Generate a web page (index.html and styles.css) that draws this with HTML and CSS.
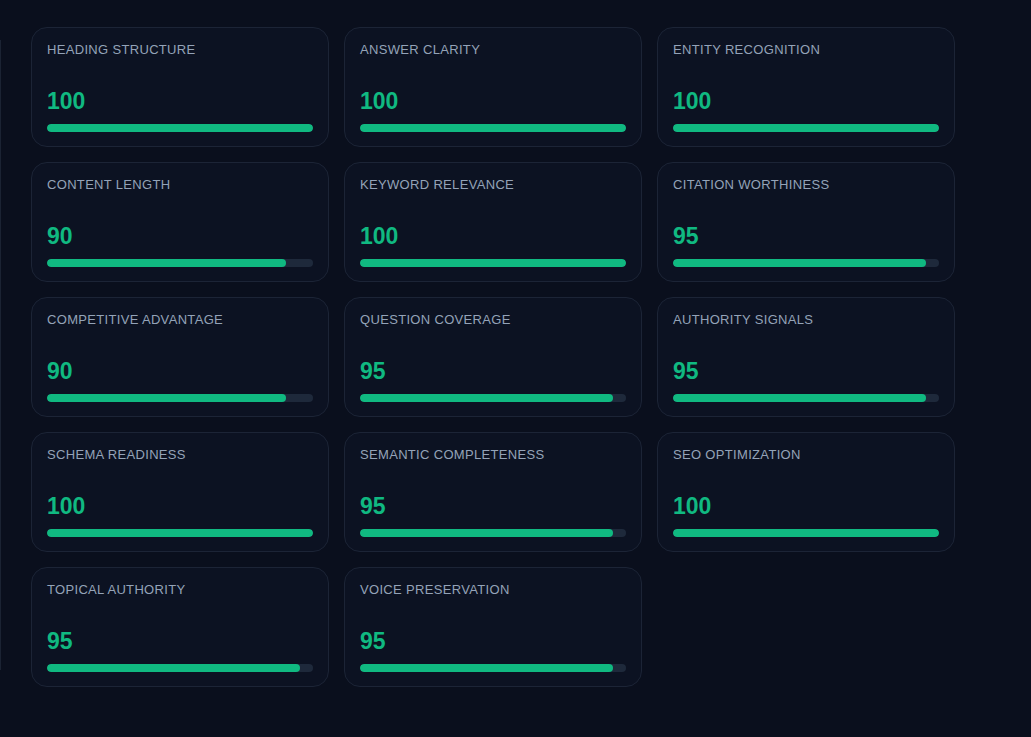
FILE: index.html
```html
<!DOCTYPE html>
<html lang="en">
<head>
    <meta charset="UTF-8">
    <meta name="viewport" content="width=device-width, initial-scale=1.0">
    <title>Content Score Breakdown</title>
    <link rel="stylesheet" href="styles.css">
</head>
<body>
    <div class="page">
        <!-- borda do painel anterior -->
        <div class="rail"></div>

        <div class="scores">
            <div class="score-card">
                <div class="score-label">Heading Structure</div>
                <div class="score-value">100</div>
                <div class="score-track"><div class="score-fill" style="width: 100%"></div></div>
            </div>
            <div class="score-card">
                <div class="score-label">Answer Clarity</div>
                <div class="score-value">100</div>
                <div class="score-track"><div class="score-fill" style="width: 100%"></div></div>
            </div>
            <div class="score-card">
                <div class="score-label">Entity Recognition</div>
                <div class="score-value">100</div>
                <div class="score-track"><div class="score-fill" style="width: 100%"></div></div>
            </div>

            <div class="score-card">
                <div class="score-label">Content Length</div>
                <div class="score-value">90</div>
                <div class="score-track"><div class="score-fill" style="width: 90%"></div></div>
            </div>
            <div class="score-card">
                <div class="score-label">Keyword Relevance</div>
                <div class="score-value">100</div>
                <div class="score-track"><div class="score-fill" style="width: 100%"></div></div>
            </div>
            <div class="score-card">
                <div class="score-label">Citation Worthiness</div>
                <div class="score-value">95</div>
                <div class="score-track"><div class="score-fill" style="width: 95%"></div></div>
            </div>

            <div class="score-card">
                <div class="score-label">Competitive Advantage</div>
                <div class="score-value">90</div>
                <div class="score-track"><div class="score-fill" style="width: 90%"></div></div>
            </div>
            <div class="score-card">
                <div class="score-label">Question Coverage</div>
                <div class="score-value">95</div>
                <div class="score-track"><div class="score-fill" style="width: 95%"></div></div>
            </div>
            <div class="score-card">
                <div class="score-label">Authority Signals</div>
                <div class="score-value">95</div>
                <div class="score-track"><div class="score-fill" style="width: 95%"></div></div>
            </div>

            <div class="score-card">
                <div class="score-label">Schema Readiness</div>
                <div class="score-value">100</div>
                <div class="score-track"><div class="score-fill" style="width: 100%"></div></div>
            </div>
            <div class="score-card">
                <div class="score-label">Semantic Completeness</div>
                <div class="score-value">95</div>
                <div class="score-track"><div class="score-fill" style="width: 95%"></div></div>
            </div>
            <div class="score-card">
                <div class="score-label">SEO Optimization</div>
                <div class="score-value">100</div>
                <div class="score-track"><div class="score-fill" style="width: 100%"></div></div>
            </div>

            <div class="score-card">
                <div class="score-label">Topical Authority</div>
                <div class="score-value">95</div>
                <div class="score-track"><div class="score-fill" style="width: 95%"></div></div>
            </div>
            <div class="score-card">
                <div class="score-label">Voice Preservation</div>
                <div class="score-value">95</div>
                <div class="score-track"><div class="score-fill" style="width: 95%"></div></div>
            </div>
        </div>
    </div>
</body>
</html>
```

FILE: styles.css
```css
* {
    margin: 0;
    padding: 0;
    box-sizing: border-box;
}

body {
    font-family: "Liberation Sans", Arial, sans-serif;
    background-color: #0a0f1d;
    min-height: 100vh;
}

.page {
    display: flex;
    align-items: flex-start;
    padding-top: 27px;
}

.rail {
    width: 1px;
    height: 630px;
    margin-top: 13px;
    background-color: #1b2333;
}

/* Grade de cards */
.scores {
    display: grid;
    grid-template-columns: repeat(3, 298px);
    gap: 15px;
    margin-left: 30px;
}

.score-card {
    display: flex;
    flex-direction: column;
    padding: 14px 15px 14px;
    background-color: #0c1222;
    border: 1px solid #1c2436;
    border-radius: 16px;
}

.score-label {
    font-size: 13px;
    line-height: 16px;
    letter-spacing: 0.025em;
    text-transform: uppercase;
    color: #94a3b8;
}

.score-value {
    margin-top: 29px;
    font-size: 23px;
    line-height: 28px;
    font-weight: bold;
    color: #10b981;
}

.score-track {
    margin-top: 9px;
    height: 8px;
    border-radius: 4px;
    background-color: #1e293b;
    overflow: hidden;
}

.score-fill {
    height: 100%;
    border-radius: 4px;
    background-color: #10b981;
}
```
